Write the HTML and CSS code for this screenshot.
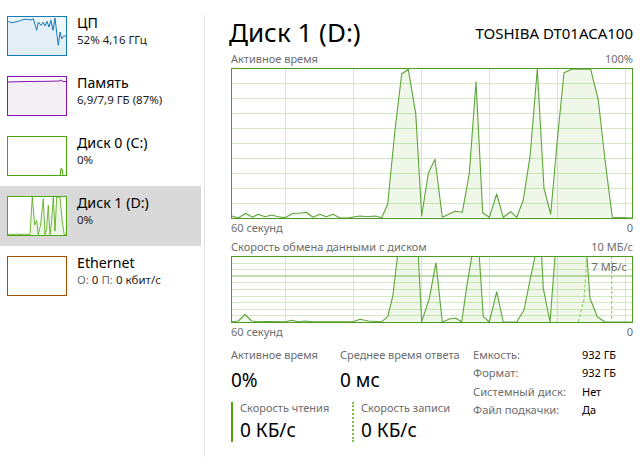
FILE: index.html
```html
<!DOCTYPE html>
<html lang="ru">
<head>
<meta charset="utf-8">
<title>Диспетчер задач — Диск 1 (D:)</title>
<link rel="stylesheet" href="styles.css">
</head>
<body>
<div class="app">
  <nav class="sidebar">
    <div class="item">
      <svg class="thumb" width="60" height="40" viewBox="0 0 60 40">
        <rect x="0.5" y="0.5" width="59" height="39" fill="#f1f6fa" stroke="#117dbb"/>
        <polyline fill="#e3eef6" stroke="none" points="1,39 1.3,5.3 4.7,6.7 8,6 11.3,5.3 14.7,4 18,3.3 21.3,3.3 24,4 26.3,2.7 29.7,14.3 31.3,6 34,9.3 36,6 38,10 40,5.3 42,11 44,4.3 46,14.3 48,2 50,19.3 51.3,29.3 53,16 54.7,22.7 56.7,20 59,20 59,39"/>
        <polyline fill="none" stroke="#117dbb" stroke-width="1" points="1.3,5.3 4.7,6.7 8,6 11.3,5.3 14.7,4 18,3.3 21.3,3.3 24,4 26.3,2.7 29.7,14.3 31.3,6 34,9.3 36,6 38,10 40,5.3 42,11 44,4.3 46,14.3 48,2 50,19.3 51.3,29.3 53,16 54.7,22.7 56.7,20 59.3,20"/>
      </svg>
      <div class="info">
        <div class="name">ЦП</div>
        <div class="sub">52% 4,16 ГГц</div>
      </div>
    </div>
    <div class="item">
      <svg class="thumb" width="60" height="40" viewBox="0 0 60 40">
        <rect x="0.5" y="0.5" width="59" height="39" fill="#fbfafb" stroke="#8b12ae"/>
        <polyline fill="#f4eff5" stroke="none" points="1,39 1,6 20,5.5 40,5.3 52,5 54,4 56,5.5 59,5.5 59,39"/>
        <polyline fill="none" stroke="#8b12ae" points="1,6 20,5.5 40,5.3 52,5 54,4 56,5.5 59,5.5"/>
      </svg>
      <div class="info">
        <div class="name">Память</div>
        <div class="sub">6,9/7,9 ГБ (87%)</div>
      </div>
    </div>
    <div class="item">
      <svg class="thumb" width="60" height="40" viewBox="0 0 60 40">
        <rect x="0.5" y="0.5" width="59" height="39" fill="#ffffff" stroke="#4da60c"/>
        <polyline fill="#eef6e8" stroke="#4da60c" points="53,39 54.2,32 55,33 56,39"/>
      </svg>
      <div class="info">
        <div class="name">Диск 0 (C:)</div>
        <div class="sub">0%</div>
      </div>
    </div>
    <div class="item selected">
      <svg class="thumb" width="60" height="40" viewBox="0 0 60 40">
        <rect x="0.5" y="0.5" width="59" height="39" fill="#ffffff" stroke="#4da60c"/>
        <polyline fill="#eef6e8" stroke="#4da60c" stroke-width="0.8" points="1,38.7 4,38 6,38.7 10,38 14,38.7 17,38 21,38.7 23,38.7 25.3,1 27.7,29 29.7,24.3 31.3,38.7 33.5,29 36.3,2.7 38,38.7 39.5,33 41.3,9.3 43,38.7 44.5,26 46.3,1 48,35 49.7,1 53,1 55.3,26 57.3,38.7 59,38.7"/>
      </svg>
      <div class="info">
        <div class="name">Диск 1 (D:)</div>
        <div class="sub">0%</div>
      </div>
    </div>
    <div class="item">
      <svg class="thumb" width="60" height="40" viewBox="0 0 60 40">
        <rect x="0.5" y="0.5" width="59" height="39" fill="#ffffff" stroke="#a74f01"/>
      </svg>
      <div class="info">
        <div class="name">Ethernet</div>
        <div class="sub"><span class="dim">О:</span> 0 <span class="dim">П:</span> 0 кбит/с</div>
      </div>
    </div>
  </nav>
  <div class="divider"></div>
  <main class="main">
    <header class="header">
      <h1 class="title">Диск 1 (D:)</h1>
      <div class="model">TOSHIBA DT01ACA100</div>
    </header>

    <div class="axis top"><span>Активное время</span><span>100%</span></div>
    <div class="chart chart-active">
      <svg width="402" height="151" viewBox="0 0 402 151">
        <g stroke="#d4e9c6" stroke-width="1" shape-rendering="crispEdges">
          <line x1="0" y1="15.5" x2="402" y2="15.5"/>
          <line x1="0" y1="30.5" x2="402" y2="30.5"/>
          <line x1="0" y1="45.5" x2="402" y2="45.5"/>
          <line x1="0" y1="60.5" x2="402" y2="60.5"/>
          <line x1="0" y1="75.5" x2="402" y2="75.5"/>
          <line x1="0" y1="90.5" x2="402" y2="90.5"/>
          <line x1="0" y1="105.5" x2="402" y2="105.5"/>
          <line x1="0" y1="120.5" x2="402" y2="120.5"/>
          <line x1="0" y1="135.5" x2="402" y2="135.5"/>
          <line x1="54.5" y1="0" x2="54.5" y2="151"/>
          <line x1="122.5" y1="0" x2="122.5" y2="151"/>
          <line x1="190.5" y1="0" x2="190.5" y2="151"/>
          <line x1="258.5" y1="0" x2="258.5" y2="151"/>
          <line x1="326.5" y1="0" x2="326.5" y2="151"/>
          <line x1="394.5" y1="0" x2="394.5" y2="151"/>
        </g>
        <polyline fill="rgba(77,166,12,0.09)" stroke="#5ea53a" stroke-width="1.1" stroke-linejoin="round" points="0.7,148 7.3,150 14.7,145.3 21.3,149.3 27.3,146.3 34,148.7 40.7,147 47.3,148.7 54,149.7 62,145.3 68,145.3 75.3,144.3 82,149.3 88.7,146.3 95.3,148.7 102,146.3 108.7,149.7 117,150 124,148.7 129,148 137.3,148.7 144,148 150.7,149.7 156.7,136 164,62 170.7,6 177.3,1.3 184.7,45.3 190.7,147.7 197.3,105.3 204,91.3 211.3,149.3 224,143.3 231.3,144.3 238.3,105.3 245,13.7 251.7,144.7 258.3,149.3 265.7,126 272.3,149.3 279.7,143.7 285.7,149.3 292.3,132 299,88.7 306.3,1 313,120.3 319.7,146 326.3,72 333,4.7 340.7,1.3 359.7,1.3 367.3,32 374,92 381.3,149.3 401,150"/>
        <rect x="0.5" y="0.5" width="401" height="150" fill="none" stroke="#4f9a23"/>
      </svg>
    </div>
    <div class="axis bottom"><span>60 секунд</span><span>0</span></div>

    <div class="axis top second"><span>Скорость обмена данными с диском</span><span>10 МБ/с</span></div>
    <div class="chart chart-rate">
      <svg width="402" height="67" viewBox="0 0 402 67">
        <defs>
          <clipPath id="inner"><rect x="0" y="0" width="402" height="67"/></clipPath>
        </defs>
        <g stroke="#d4e9c6" stroke-width="1" shape-rendering="crispEdges">
          <line x1="0" y1="7.5" x2="402" y2="7.5"/>
          <line x1="0" y1="13.5" x2="402" y2="13.5"/>
          <line x1="0" y1="26.5" x2="402" y2="26.5"/>
          <line x1="0" y1="33.5" x2="402" y2="33.5"/>
          <line x1="0" y1="40.5" x2="402" y2="40.5"/>
          <line x1="0" y1="46.5" x2="402" y2="46.5"/>
          <line x1="0" y1="53.5" x2="402" y2="53.5"/>
          <line x1="0" y1="59.5" x2="402" y2="59.5"/>
          <line x1="54.5" y1="0" x2="54.5" y2="67"/>
          <line x1="122.5" y1="0" x2="122.5" y2="67"/>
          <line x1="190.5" y1="0" x2="190.5" y2="67"/>
          <line x1="258.5" y1="0" x2="258.5" y2="67"/>
          <line x1="326.5" y1="0" x2="326.5" y2="67"/>
          <line x1="394.5" y1="0" x2="394.5" y2="67"/>
        </g>
        <line x1="0" y1="20" x2="402" y2="20" stroke="#a9d290" stroke-width="1.3"/>
        <g clip-path="url(#inner)">
          <polyline fill="rgba(77,166,12,0.09)" stroke="#5ea53a" stroke-width="1.1" stroke-linejoin="round" points="0.7,65.7 7.3,65 14,58.5 20.7,65 27.3,65.7 34,65.5 54,65.7 60.7,64.3 67.3,65.7 74,65 80.7,65.7 122,65.7 129,63.3 137.3,65 150.7,65.7 156.7,60.7 161.7,40.7 166.5,0 169,-15 185,-15 187.3,0 190.7,65.7 198.3,42.3 205,6.7 211.3,66 219,62.7 225,62.3 230.7,66 235.7,30.7 240.7,0.7 243,-15 246,-15 248.3,0.7 252.3,60.7 258.3,66 265.7,35.7 272.3,66 285.7,66 293,54 299.7,20.7 304,0.7 306,-15 308,-15 310.7,0.7 312.3,32.3 319,66 324,0.7 326,-15 354,-15 356,0.7 359,42.3 366.3,60.7 374,66 401,66"/>
          <polyline fill="none" stroke="#8fcf5c" stroke-width="1.1" stroke-dasharray="3 2" points="347.3,65.7 353,44 355.7,0.7 356,-10"/>
          <line x1="380.7" y1="0" x2="380.7" y2="66" stroke="#8fcf5c" stroke-width="1.1" stroke-dasharray="3 2"/>
        </g>
        <rect x="0.5" y="0.5" width="401" height="66" fill="none" stroke="#4f9a23"/>
      </svg>
      <span class="level">7 МБ/с</span>
    </div>
    <div class="axis bottom"><span>60 секунд</span><span>0</span></div>

    <section class="stats">
      <div class="left">
        <div class="stat">
          <div class="label">Активное время</div>
          <div class="value">0%</div>
        </div>
        <div class="stat">
          <div class="label">Среднее время ответа</div>
          <div class="value">0 мс</div>
        </div>
        <div class="stat rw read">
          <div class="label">Скорость чтения</div>
          <div class="value">0 КБ/с</div>
        </div>
        <div class="stat rw write">
          <div class="label">Скорость записи</div>
          <div class="value">0 КБ/с</div>
        </div>
      </div>
      <dl class="props">
        <dt>Емкость:</dt><dd>932 ГБ</dd>
        <dt>Формат:</dt><dd>932 ГБ</dd>
        <dt>Системный диск:</dt><dd>Нет</dd>
        <dt>Файл подкачки:</dt><dd>Да</dd>
      </dl>
    </section>
  </main>
</div>
</body>
</html>
```

FILE: styles.css
```css
* { box-sizing: border-box; }
html, body {
  margin: 0;
  padding: 0;
  background: #ffffff;
}
body {
  font-family: "Noto Sans", "Open Sans", sans-serif;
  color: #000;
  width: 643px;
  height: 457px;
  overflow: hidden;
}
.app {
  display: flex;
  height: 457px;
}
.sidebar {
  width: 201px;
  flex: none;
  padding-top: 6px;
}
.item {
  display: flex;
  align-items: flex-start;
  height: 60px;
  padding: 10px 0 0 7px;
}
.item.selected {
  background: #d9d9d9;
}
.thumb {
  flex: none;
  display: block;
}
.info {
  margin-left: 10px;
}
.name {
  font-size: 14.2px;
  line-height: 19px;
  margin-top: -3px;
  color: #000;
}
.sub {
  font-size: 11.5px;
  line-height: 16px;
  color: #1a1a1a;
}
.dim { color: #6d6d6d; }
.divider {
  flex: none;
  width: 1px;
  margin-left: 3px;
  margin-top: 15px;
  background: #e3e3e3;
}
.main {
  flex: 1;
  padding: 16px 10px 0 26px;
}
.header {
  display: flex;
  justify-content: space-between;
  align-items: flex-start;
  height: 34px;
  margin-left: -2px;
}
.title {
  margin: 0;
  font-weight: normal;
  font-size: 26px;
  line-height: 32px;
}
.model {
  font-size: 15px;
  line-height: 20px;
  margin-top: 7px;
}
.axis {
  display: flex;
  justify-content: space-between;
  font-size: 11px;
  color: #6d6d6d;
}
.axis.top { line-height: 18px; }
.axis.bottom { line-height: 17px; }
.axis.second { margin-top: 2px; }
.chart {
  position: relative;
  width: 402px;
}
.chart svg { display: block; }
.level {
  position: absolute;
  right: 6px;
  top: 3px;
  font-size: 11px;
  line-height: 16px;
  color: #6d6d6d;
}
.stats {
  display: flex;
  align-items: flex-start;
  margin-top: 6px;
}
.left {
  display: grid;
  grid-template-columns: 109px 133px;
  row-gap: 10px;
  width: 242px;
}
.label {
  font-size: 11px;
  line-height: 18px;
  color: #6d6d6d;
  white-space: nowrap;
}
.value {
  font-size: 19px;
  line-height: 24px;
  margin-top: 4px;
}
.rw {
  padding-left: 7px;
  height: 40px;
}
.rw .label { line-height: 12px; }
.rw .value { line-height: 28px; margin-top: 2px; }
.read { border-left: 2px solid #4da60c; }
.write { border-left: 2px dotted #7fc04a; margin-left: 12px; }
.props {
  margin: 0;
  display: grid;
  grid-template-columns: 109px auto;
  align-content: start;
  font-size: 11.2px;
  line-height: 18.4px;
}
.props dt { color: #6d6d6d; }
.props dd { margin: 0; font-size: 11px; color: #000; }
```
